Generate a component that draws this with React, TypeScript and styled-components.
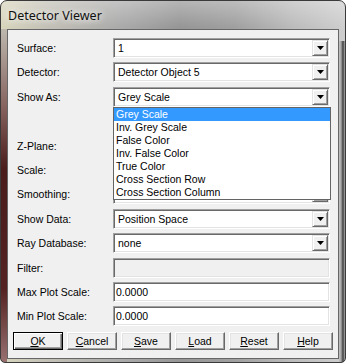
import React from 'react';
import styled, { createGlobalStyle, css } from 'styled-components';

const GlobalStyle = createGlobalStyle`
  html, body { margin: 0; padding: 0; background: #ffffff; }
  body { width: 346px; height: 363px; overflow: hidden; }
  * { box-sizing: border-box; }
`;

const UI_FONT = `"Liberation Sans", Arial, sans-serif`;

const Window = styled.div`
  position: relative;
  width: 346px;
  height: 363px;
  border: 1px solid #3a3a3a;
  border-radius: 7px 7px 5px 5px;
  display: flex;
  flex-direction: column;
  padding: 0 6px 3px 6px;
  background:
    linear-gradient(180deg, #bdb8ae 0px, #84605c 80px, #4a1c1c 140px, #542222 260px, #987070 100%) left 0 top 28px / 6px calc(100% - 28px) no-repeat,
    linear-gradient(90deg, #c2c2c2 0px, #a8a8a8 2px, #3e3e3e 4px, #b0b0b0 6px) right 0 top 40px / 6px calc(100% - 40px) no-repeat,
    linear-gradient(180deg, rgba(255, 255, 255, 0.3) 0px, rgba(255, 255, 255, 0) 26px),
    linear-gradient(90deg, #d8d5bc 0%, #c2c0b6 14%, #aaaaaa 35%, #969696 52%, #a0a0a0 68%, #bcbcbc 85%, #cecece 100%);
  overflow: hidden;
`;

const TitleBar = styled.div`
  height: 28px;
  flex: none;
  display: flex;
  align-items: center;
  padding-left: 1px;
  padding-top: 1px;
`;

const Title = styled.span`
  font-family: "Noto Sans", "Open Sans", sans-serif;
  font-size: 12.5px;
  color: #111;
  text-shadow: 0 0 6px rgba(255, 255, 255, 0.9), 0 0 10px rgba(255, 255, 255, 0.7);
`;

const Client = styled.div`
  flex: 1;
  border: 1px solid #666;
  background: #f0f0f0;
  padding: 8px 5px 0 5px;
  display: flex;
  flex-direction: column;
  font-family: ${UI_FONT};
  font-size: 10.5px;
  color: #000;
`;

const Form = styled.div`
  display: grid;
  grid-template-columns: 96px 217px;
  grid-auto-rows: 20px;
  row-gap: 4.4px;
  padding-left: 4px;
`;

const Label = styled.div`
  display: flex;
  align-items: center;
  white-space: nowrap;
`;

const sunken = css`
  border-style: solid;
  border-width: 1px;
  border-color: #a0a0a0 #ffffff #ffffff #a0a0a0;
  box-shadow: inset 1px 1px 0 #696969, inset -1px -1px 0 #e3e3e3;
`;

const Combo = styled.div`
  position: relative;
  ${sunken};
  background: #fff;
  display: flex;
  align-items: stretch;
  padding: 1px;
`;

const ComboText = styled.div`
  flex: 1;
  display: flex;
  align-items: center;
  padding-left: 3px;
  white-space: nowrap;
  overflow: hidden;
`;

const DropButton = styled.div`
  width: 16px;
  flex: none;
  background: #f0f0f0;
  border-style: solid;
  border-width: 1px;
  border-color: #e3e3e3 #696969 #696969 #e3e3e3;
  box-shadow: inset 1px 1px 0 #ffffff, inset -1px -1px 0 #a0a0a0;
  display: flex;
  align-items: center;
  justify-content: center;
`;

const Edit = styled.div<{ $disabled?: boolean }>`
  ${sunken};
  background: ${(p) => (p.$disabled ? '#f0f0f0' : '#ffffff')};
  display: flex;
  align-items: center;
  padding-left: 2px;
  white-space: nowrap;
`;

const DropList = styled.div`
  position: absolute;
  top: 19px;
  left: -1px;
  width: 218px;
  height: 93px;
  border: 1px solid #646464;
  background: #fff;
  z-index: 5;
  display: flex;
  flex-direction: column;
`;

const ListItem = styled.div<{ $selected?: boolean }>`
  height: 13px;
  line-height: 13px;
  padding-left: 2px;
  white-space: nowrap;
  background: ${(p) => (p.$selected ? '#3399ff' : 'transparent')};
  color: ${(p) => (p.$selected ? '#ffffff' : '#000000')};
`;

const ButtonRow = styled.div`
  display: flex;
  gap: 4px;
  margin-top: 5.6px;
`;

const PushButton = styled.div<{ $default?: boolean }>`
  width: 50px;
  height: 18px;
  background: #f0f0f0;
  display: flex;
  align-items: center;
  justify-content: center;
  border-style: solid;
  border-width: 1px;
  ${(p) =>
    p.$default
      ? css`
          border-color: #000;
          box-shadow: inset 1px 1px 0 #ffffff, inset -1px -1px 0 #696969, inset -2px -2px 0 #a0a0a0;
        `
      : css`
          border-color: #ffffff #696969 #696969 #ffffff;
          box-shadow: inset -1px -1px 0 #a0a0a0, inset 1px 1px 0 #e3e3e3;
        `}
  u { text-decoration: underline; text-underline-offset: 1px; }
`;

const Arrow = () => (
  <svg width="7" height="4" viewBox="0 0 7 4">
    <polygon points="0,0 7,0 3.5,4" fill="#000" />
  </svg>
);

const ComboBox: React.FC<{ value?: string; children?: React.ReactNode }> = ({ value, children }) => (
  <Combo>
    <ComboText>{value}</ComboText>
    <DropButton>
      <Arrow />
    </DropButton>
    {children}
  </Combo>
);

const options = [
  'Grey Scale',
  'Inv. Grey Scale',
  'False Color',
  'Inv. False Color',
  'True Color',
  'Cross Section Row',
  'Cross Section Column',
];

const buttons: { key: string; rest: string; def?: boolean }[] = [
  { key: 'O', rest: 'K', def: true },
  { key: 'C', rest: 'ancel' },
  { key: 'S', rest: 'ave' },
  { key: 'L', rest: 'oad' },
  { key: 'R', rest: 'eset' },
  { key: 'H', rest: 'elp' },
];

export default function App() {
  return (
    <>
      <GlobalStyle />
      <Window>
        <TitleBar>
          <Title>Detector Viewer</Title>
        </TitleBar>
        <Client>
          <Form>
            <Label>Surface:</Label>
            <ComboBox value="1" />
            <Label>Detector:</Label>
            <ComboBox value="Detector Object 5" />
            <Label>Show As:</Label>
            <ComboBox value="Grey Scale">
              <DropList>
                {options.map((o, i) => (
                  <ListItem key={o} $selected={i === 0}>
                    {o}
                  </ListItem>
                ))}
              </DropList>
            </ComboBox>
            <Label />
            <ComboBox />
            <Label>Z-Plane:</Label>
            <ComboBox />
            <Label>Scale:</Label>
            <ComboBox />
            <Label>Smoothing:</Label>
            <ComboBox />
            <Label>Show Data:</Label>
            <ComboBox value="Position Space" />
            <Label>Ray Database:</Label>
            <ComboBox value="none" />
            <Label>Filter:</Label>
            <Edit $disabled />
            <Label>Max Plot Scale:</Label>
            <Edit>0.0000</Edit>
            <Label>Min Plot Scale:</Label>
            <Edit>0.0000</Edit>
          </Form>
          <ButtonRow>
            {buttons.map((b) => (
              <PushButton key={b.key} $default={b.def}>
                <span>
                  <u>{b.key}</u>
                  {b.rest}
                </span>
              </PushButton>
            ))}
          </ButtonRow>
        </Client>
      </Window>
    </>
  );
}
